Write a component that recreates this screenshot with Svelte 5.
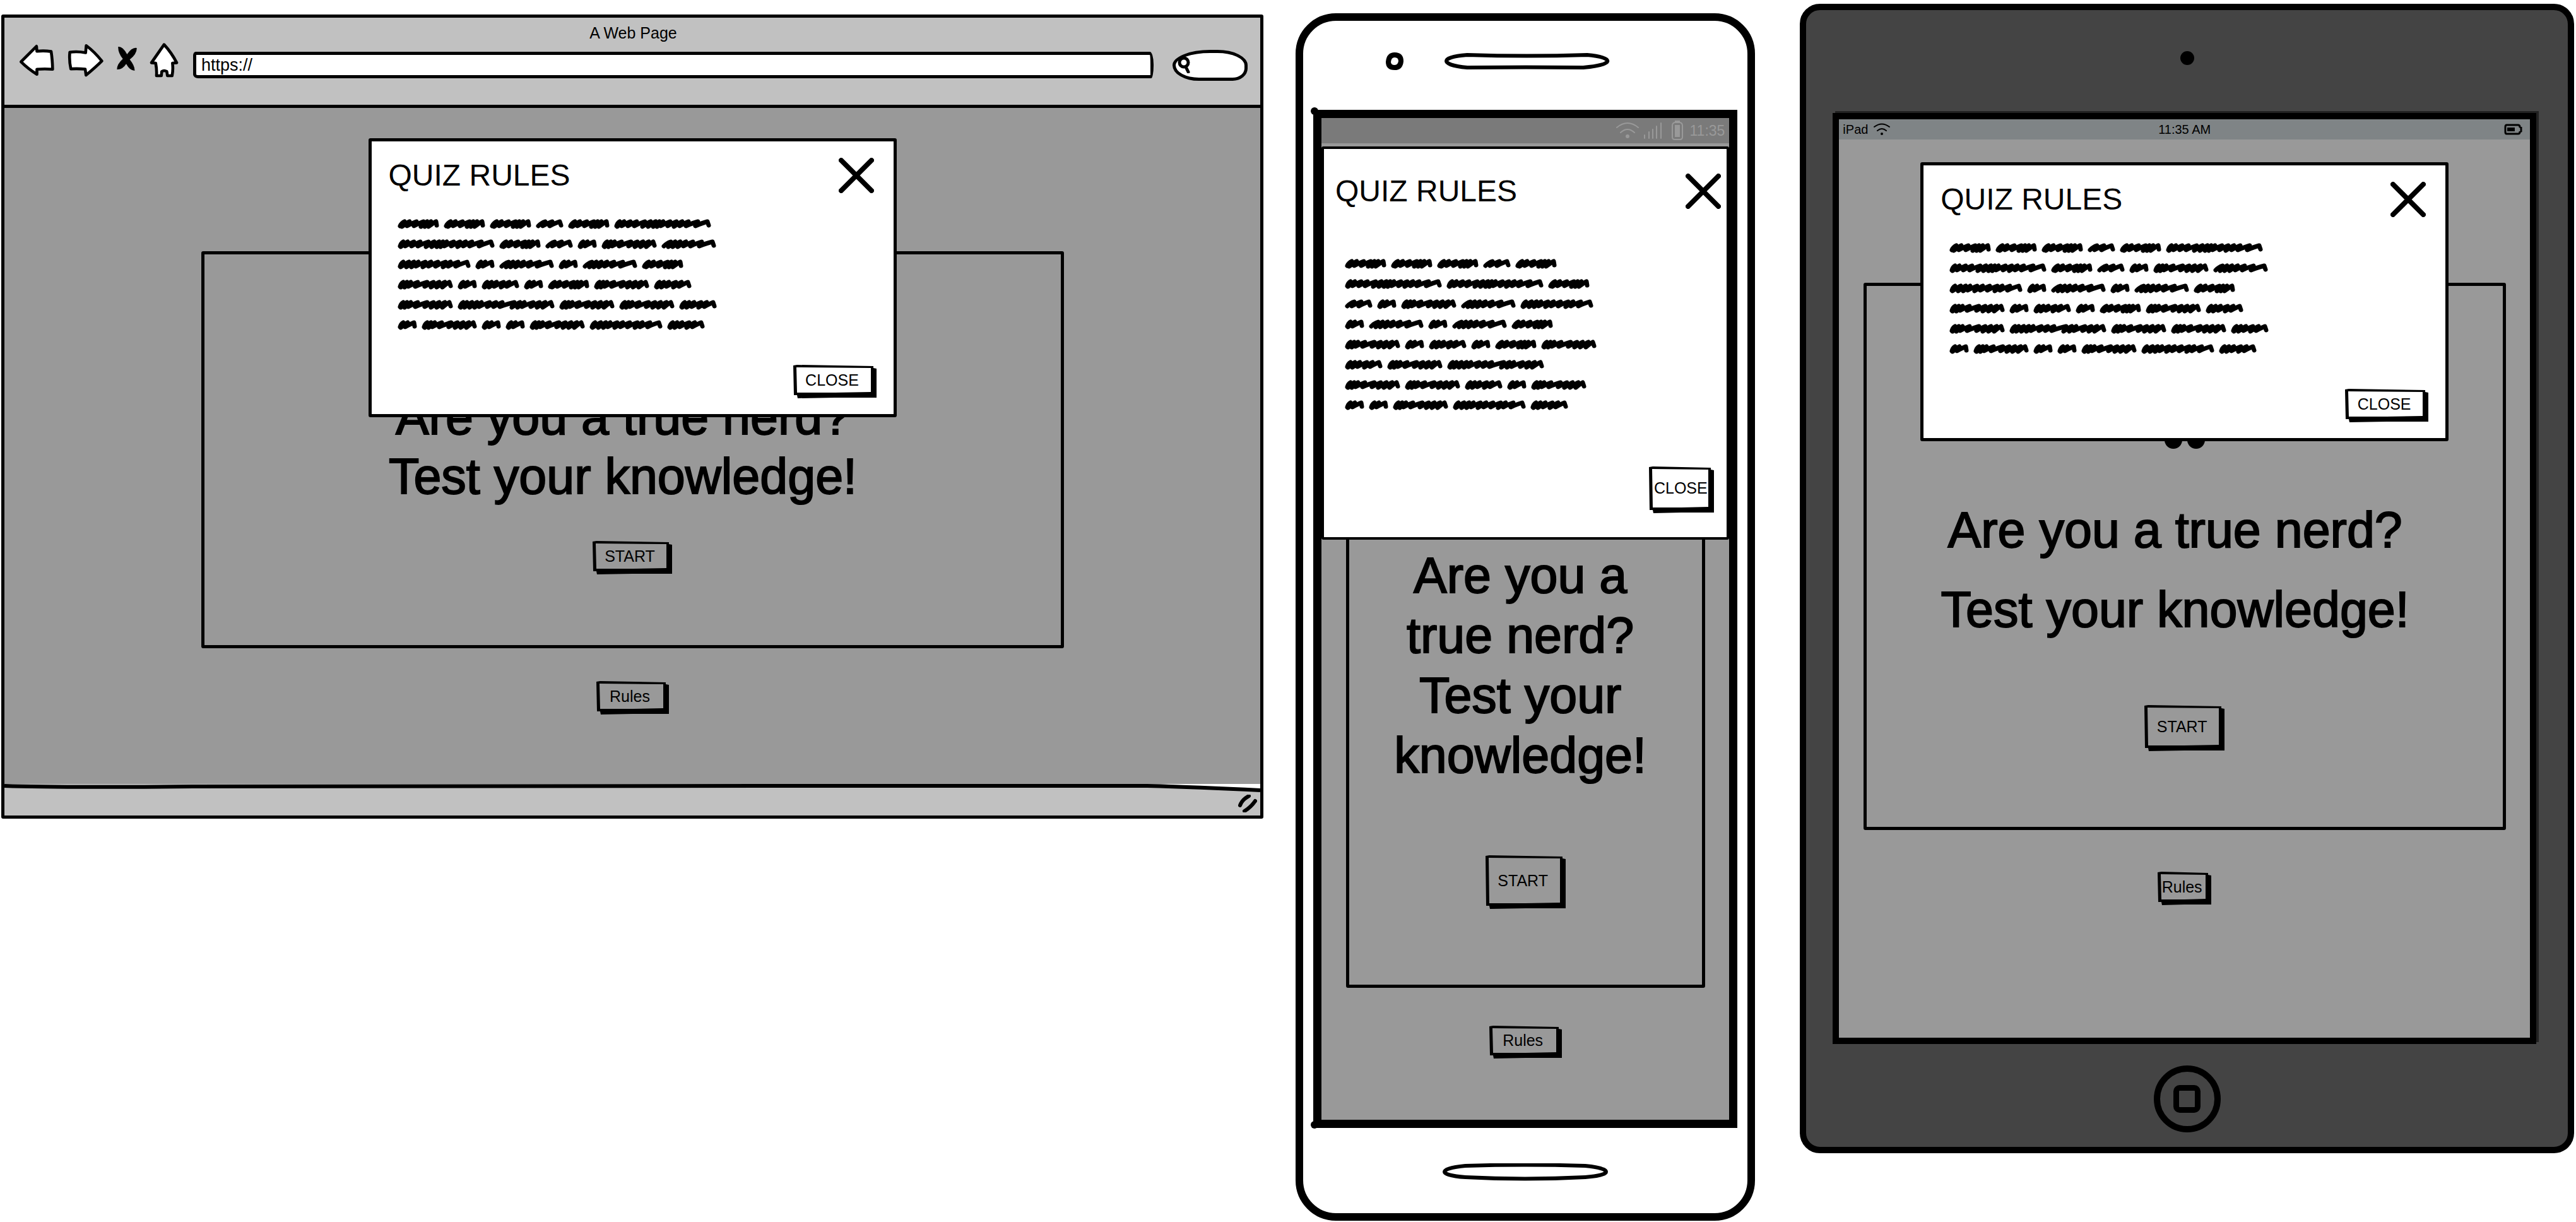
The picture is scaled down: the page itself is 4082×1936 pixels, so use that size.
<script>
  const scribbles = {
    a: { w: 64, peaks: [10, 18, 29, 40, 46, 52, 60] },
    b: { w: 42, peaks: [14, 25, 37] },
    c: { w: 152, peaks: [8, 15, 25, 35, 48, 57, 65, 71, 77, 88, 98, 107, 117, 132, 147] },
    d: { w: 29, peaks: [8, 15, 25] },
    e: { w: 86, peaks: [8, 14, 20, 31, 46, 56, 65, 74, 81] },
    f: { w: 85, peaks: [14, 21, 29, 38, 49, 63, 80] },
    g: { w: 114, peaks: [8, 17, 25, 32, 43, 52, 63, 75, 83, 95, 109] },
    h: { w: 58, peaks: [8, 15, 23, 34, 43, 53] },
    i: { w: 152, peaks: [8, 14, 22, 30, 37, 50, 60, 70, 89, 98, 105, 119, 129, 138, 147] }
  };
  const words = 'aaabaccabdefgdfdfaedhdaeheieehdeddegh'.split('');

  function scribblePath({ w, peaks }) {
    let d = 'M3 10';
    peaks.forEach((x, n) => {
      const prev = n ? peaks[n - 1] : 1;
      d += ` Q${(prev + x) / 2} 5 ${x} 3`;
      const last = n === peaks.length - 1;
      const wide = !last && peaks[n + 1] - x > 9;
      d += last ? ` L${w - 3} 9` : ` L${x - 4} ${wide ? 10 : 11}`;
    });
    return d;
  }

  function framePath(w, h) {
    return `M0 1L6 0L${w - 5} 2L${w - 5} 5L${w} 6L${w} ${h - 1}L${w / 2} ${h - 1}L7 ${h}L6 ${h - 5}L1 ${h - 5}Z` +
      `M5 4L${w - 9} 5L${w - 9} ${h - 10}L${w / 2} ${h - 9}L6 ${h - 9}Z`;
  }

  let open = $state({ browser: true, phone: true, tablet: true });
</script>

{#snippet sketchButton(label, w, h, onclick)}
  <button class="sketch" style:width="{w}px" style:height="{h}px" {onclick}>
    <svg viewBox="0 0 {w} {h}" aria-hidden="true"><path fill-rule="evenodd" d={framePath(w, h)} /></svg>
    <span>{label}</span>
  </button>
{/snippet}

{#snippet modal(device, w, h)}
  {#if open[device]}
    <div class="modal" role="dialog" aria-labelledby="{device}-rules">
      <header>
        <h2 id="{device}-rules">QUIZ RULES</h2>
        <button class="dismiss" aria-label="Dismiss" onclick={() => (open[device] = false)}>
          <svg viewBox="0 0 56 56"><path d="M4 4L52 52M52 4L4 52" /></svg>
        </button>
      </header>
      <div class="scribbles">
        {#each words as word}
          <svg width={scribbles[word].w} height="14" aria-hidden="true"><path d={scribblePath(scribbles[word])} /></svg>
        {/each}
      </div>
      <footer>{@render sketchButton('CLOSE', w, h, () => (open[device] = false))}</footer>
    </div>
  {/if}
{/snippet}

{#snippet quiz(device, start, rules)}
  <section class="card">
    {#if device === 'tablet'}
      <svg class="dots" viewBox="0 0 64 28" aria-hidden="true"><circle cx="14" cy="14" r="14" /><circle cx="50" cy="14" r="14" /></svg>
    {/if}
    <h1><span>Are you a true nerd?</span> <span>Test your knowledge!</span></h1>
    {@render sketchButton('START', start[0], start[1])}
  </section>
  {@render sketchButton('Rules', rules[0], rules[1], () => (open[device] = true))}
{/snippet}

<main>
  <section class="browser">
    <header class="chrome">
      <div class="title">A Web Page</div>
      <div class="tools">
        <button class="tool" aria-label="Back">
          <svg width="57" height="53" viewBox="32 26 172 158"><path d="M42 112L116 38L118 62Q150 58 186 63Q192 100 193 148Q155 145 118 148L118 172Q75 145 42 112Z" /></svg>
        </button>
        <button class="tool" aria-label="Forward">
          <svg width="58" height="55" viewBox="255 26 176 165"><path d="M266 70Q300 64 342 72L345 38Q385 68 420 112Q390 142 344 180L340 151Q305 148 271 150Q262 110 266 70Z" /></svg>
        </button>
        <button class="tool stop" aria-label="Stop">
          <svg width="32" height="40" viewBox="503 39 96 120"><path class="solid" d="M510 42Q532 40 552 78Q575 44 598 48Q600 75 565 103Q590 135 588 156Q565 156 548 124Q530 152 504 150Q504 125 532 100Q508 70 510 42Z" /></svg>
        </button>
        <button class="tool" aria-label="Home">
          <svg width="46" height="55" viewBox="651 24 138 165"><path d="M720 32Q755 70 780 118L760 120Q764 150 758 180L736 180L733 160Q720 152 709 160L707 180L684 180Q686 150 680 120L660 118Q690 75 720 32Z" /></svg>
        </button>
        <input class="url" aria-label="Address" value="https://" />
        <label class="search">
          <svg width="22" height="26" viewBox="0 0 22 26" aria-hidden="true"><circle cx="10" cy="9" r="7" /><path d="M13 16L17 24" /></svg>
          <input aria-label="Search" />
        </label>
      </div>
    </header>
    <div class="page">
      {@render quiz('browser', [126, 53], [115, 53])}
      {@render modal('browser', 132, 53)}
    </div>
    <footer class="status">
      <svg class="edge" viewBox="0 0 2000 14" preserveAspectRatio="none" aria-hidden="true">
        <path class="gap" d="M1840 0H2000V9Z" />
        <path class="stroke" d="M0 3Q80 6 300 4Q900 2 1200 3L1820 3Q1900 5 2000 10" />
      </svg>
      <svg class="grip" width="30" height="28" viewBox="0 0 30 28" aria-hidden="true"><path d="M3 17Q6 8 17 2M10 26Q20 20 27 10" /></svg>
    </footer>
  </section>

  <section class="phone">
    <div class="top">
      <svg width="28" height="28" viewBox="0 0 28 28" aria-hidden="true"><path d="M14 4Q24 4 24 14Q23 24 14 24Q4 24 4 15Q5 4 14 4Z" /></svg>
      <svg width="262" height="26" viewBox="0 0 262 26" aria-hidden="true"><path d="M36 3Q130 6 226 3C270 7 270 19 220 23Q130 22 36 23C-8 19 -8 6 36 3Z" /></svg>
    </div>
    <div class="screen">
      <div class="bar">
        <svg width="38" height="28" viewBox="0 0 38 28" aria-hidden="true"><path class="line" d="M2 9Q19 -5 36 9M8 17Q19 7 30 17" /><circle cx="19" cy="23" r="3" /></svg>
        <svg width="30" height="28" viewBox="0 0 30 28" aria-hidden="true"><path class="line" d="M2 26V21M9 26V16M15 26V12M21 26V7M28 26V2" /></svg>
        <svg width="18" height="32" viewBox="0 0 18 32" aria-hidden="true"><path class="line" d="M5 3H13Q17 4 17 8V26Q17 30 13 30H5Q1 30 1 26V8Q1 4 5 3Z" /><path d="M5 0H13V3H5ZM5 7H13V26H5Z" /></svg>
        <span>11:35</span>
      </div>
      <div class="page">
        {@render quiz('phone', [127, 85], [115, 52])}
        {@render modal('phone', 103, 74)}
      </div>
    </div>
    <div class="bottom">
      <svg width="262" height="28" viewBox="0 0 262 28" aria-hidden="true"><path d="M36 4Q130 1 226 4C270 8 270 19 226 22Q130 27 36 22C-8 19 -8 8 36 4Z" /></svg>
    </div>
  </section>

  <section class="tablet">
    <div class="camera"></div>
    <div class="screen">
      <div class="bar">
        <span class="carrier">iPad
          <svg width="28" height="20" viewBox="0 0 28 20" aria-hidden="true"><path class="line" d="M2 6Q14 -3 26 6M7 12Q14 6 21 12" /><circle cx="14" cy="17" r="2" /></svg>
        </span>
        <span>11:35 AM</span>
        <svg class="battery" width="29" height="18" viewBox="0 0 29 18" aria-hidden="true"><path class="line" d="M4 2H22Q25 2 25 5L27 6V12L25 13Q25 16 22 16H4Q2 16 2 13V5Q2 2 4 2Z" /><path d="M5 6H17V12H5Z" /></svg>
      </div>
      <div class="page">
        {@render quiz('tablet', [127, 73], [85, 53])}
        {@render modal('tablet', 132, 53)}
      </div>
    </div>
    <button class="home" aria-label="Home"><i></i></button>
  </section>
</main>

<style>
  :global(body) { margin: 0; background: #fff; }
  main {
    display: grid;
    grid-template-columns: 1999fr 728fr 1246fr;
    align-items: start;
    padding: 0 3px 0 2px;
    font-family: "Liberation Sans", Arial, sans-serif;
    font-size: 25px;
    color: #000;
    column-gap: 51px;
  }
  section, div, header, footer, button, input, label { box-sizing: border-box; }
  button { font: inherit; color: inherit; background: none; border: 0; padding: 0; cursor: pointer; }
  h1, h2 { margin: 0; font-weight: 400; }
  svg { display: block; }

  .sketch {
    position: relative;
    display: flex;
    align-items: center;
    justify-content: center;
    padding: 0 8px 5px 0;
    flex: none;
  }
  .sketch svg { position: absolute; inset: 0; width: 100%; height: 100%; }

  .page {
    position: relative;
    display: flex;
    flex-direction: column;
    align-items: center;
    background: #999;
  }
  .card {
    display: flex;
    flex-direction: column;
    align-items: center;
    width: min(1367px, 94%);
    border: 5px solid #000;
    border-radius: 3px;
  }
  h1 {
    font-size: 79px;
    line-height: 94px;
    text-align: center;
    padding-right: 30px;
    -webkit-text-stroke: 2px #000;
  }
  h1 span { display: block; }

  .modal {
    position: absolute;
    left: 0;
    right: 0;
    top: 48px;
    margin: 0 auto;
    width: min(837px, 100%);
    background: #fff;
    border: 5px solid #000;
    border-radius: 3px;
    padding: 26px 31px 25px 27px;
  }
  .modal header { display: flex; justify-content: space-between; align-items: center; }
  h2 { font-size: 48px; line-height: 56px; }
  .dismiss svg { width: 56px; height: 56px; fill: none; stroke: #000; stroke-width: 8; stroke-linecap: round; }
  .scribbles { display: flex; flex-wrap: wrap; gap: 18px 9px; width: 515px; margin: 42px 0 56px 15px; }
  .scribbles svg { fill: none; stroke: #000; stroke-width: 7; stroke-linecap: round; stroke-linejoin: round; overflow: visible; }
  .modal footer { display: flex; justify-content: flex-end; margin-right: -4px; }

  .browser { margin-top: 23px; border: 5px solid #000; border-radius: 3px; }
  .chrome { background: #c1c1c1; border-bottom: 5px solid #000; padding: 9px 20px 43px 23px; }
  .title { text-align: center; line-height: 30px; font-size: 25px; }
  .tools { display: flex; align-items: center; gap: 20px; height: 56px; }
  .tool svg { fill: #fff; stroke: #000; stroke-width: 14; stroke-linejoin: round; }
  .tool .solid { fill: #000; stroke: none; }
  .stop { margin-bottom: 4px; }
  .url {
    flex: 1;
    min-width: 0;
    height: 42px;
    border: 5px solid #000;
    border-radius: 4px 6px 4px 8px / 6px 20px 20px 6px;
    background: #fff;
    font: inherit;
    font-size: 27px;
    padding: 0 8px;
    margin: 16px 0 0 3px;
  }
  .search {
    display: flex;
    align-items: center;
    width: 119px;
    height: 49px;
    margin: 16px 0 0 10px;
    border: 5px solid #000;
    border-radius: 50% 40% 20% 35% / 50% 50% 40% 50%;
    background: #fff;
    padding-left: 3px;
  }
  .search svg { flex: none; fill: none; stroke: #000; stroke-width: 5; stroke-linecap: round; }
  .search input { min-width: 0; width: 100%; border: 0; background: none; font: inherit; outline: 0; }
  .browser .page { padding: 227px 0 110px; }
  .browser .card { padding: 211px 0 112px; margin-bottom: 52px; }
  .browser h1 { margin-bottom: 55px; }
  .status { position: relative; display: flex; justify-content: flex-end; align-items: center; height: 50px; background: #c1c1c1; padding: 12px 5px 0; }
  .edge { position: absolute; top: 0; left: 0; width: 100%; height: 14px; }
  .edge .gap { fill: #fff; }
  .edge .stroke { fill: none; stroke: #000; stroke-width: 6; }
  .grip { fill: none; stroke: #000; stroke-width: 6; stroke-linecap: round; }

  .phone { margin-top: 21px; border: 12px solid #000; border-radius: 64px; padding: 0 16px; }
  .top { display: flex; align-items: center; gap: 65px; padding: 50px 0 63px 115px; }
  .top svg, .bottom svg { fill: none; stroke: #000; stroke-width: 6; }
  .top svg:first-child { stroke-width: 8; }
  .phone .screen { position: relative; border: 13px solid #000; }
  .phone .screen::before, .phone .screen::after {
    content: "";
    position: absolute;
    left: -17px;
    width: 12px;
    height: 12px;
    border-radius: 50%;
    background: #000;
  }
  .phone .screen::before { top: -17px; }
  .phone .screen::after { bottom: -14px; }
  .phone .bar { display: flex; align-items: center; justify-content: flex-end; height: 40px; padding-right: 7px; background: #7a7a7a; color: #999; }
  .phone .bar svg { fill: #999; margin-right: 6px; }
  .phone .bar svg:nth-child(2) { margin-right: 15px; }
  .phone .bar svg:nth-child(3) { margin-right: 11px; }
  .bar .line { fill: none; stroke: #999; stroke-width: 2; stroke-linecap: round; }
  .phone .bar span { font-size: 23px; }
  .phone .page { padding: 172px 0 97px; }
  .phone .card { width: 88%; padding: 460px 0 120px; margin-bottom: 60px; }
  .phone h1 { width: 430px; padding-right: 16px; line-height: 95px; margin-bottom: 111px; }
  .phone .modal { top: 5px; padding: 39px 9px 38px 18px; border-width: 4px; }
  .phone .scribbles { width: 400px; margin: 80px 0 90px 16px; }
  .phone .modal footer { margin-right: 11px; }
  .phone .modal .sketch { padding-right: 3px; }
  .bottom { display: flex; justify-content: center; padding: 56px 0 51px; }

  .tablet { margin: 6px 0 0 20px; border: 10px solid #000; border-radius: 32px; background: #444; padding: 0 42px 23px; }
  .camera { width: 22px; height: 22px; margin: 65px auto 76px; border-radius: 50%; background: #000; }
  .tablet .screen { margin-right: 8px; border: 10px solid #000; box-shadow: 4px -3px #222; }
  .tablet .bar { display: grid; grid-template-columns: 1fr auto 1fr; align-items: center; height: 32px; padding: 0 6px; background: #7f8486; font-size: 20px; }
  .tablet .bar .line { stroke: #000; }
  .tablet .bar .battery .line { stroke-width: 3; }
  .carrier { display: flex; align-items: center; gap: 8px; }
  .battery { justify-self: end; margin-right: 6px; }
  .tablet .page { padding: 227px 0 210px; }
  .tablet .card { width: 93%; padding: 230px 0 120px; margin-bottom: 66px; }
  .dots { width: 64px; height: 28px; margin-bottom: 66px; }
  .tablet h1 { line-height: 126px; margin-bottom: 88px; }
  .tablet .modal { top: 36px; }
  .home {
    display: flex;
    align-items: center;
    justify-content: center;
    width: 106px;
    height: 106px;
    margin: 34px auto 0;
    border: 10px solid #000;
    border-radius: 50%;
  }
  .home i { width: 43px; height: 44px; box-sizing: border-box; border: 9px solid #000; border-radius: 10px; }
</style>
